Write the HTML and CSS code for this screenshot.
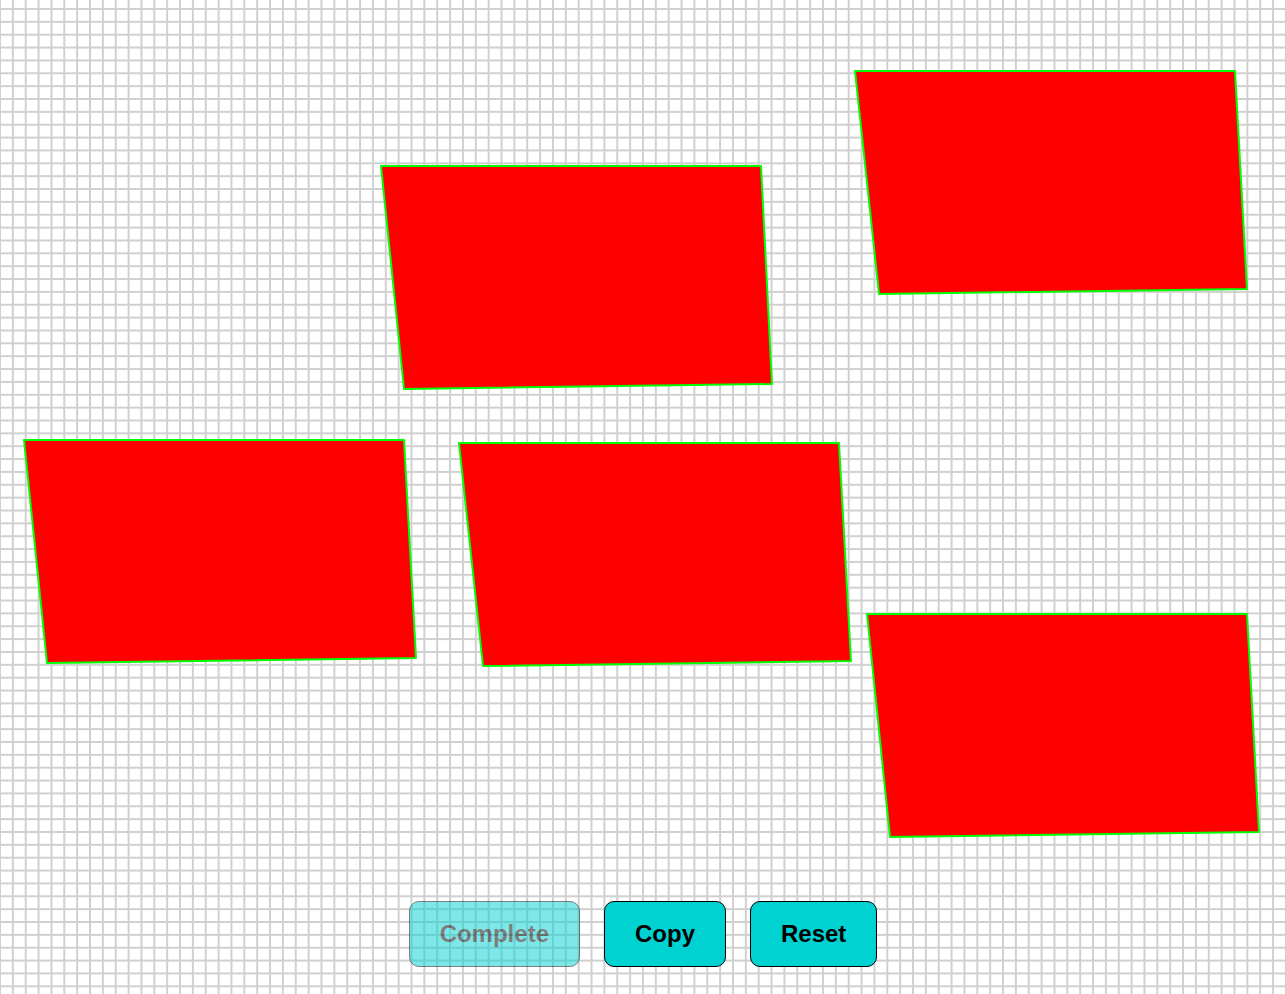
FILE: index.html
```html
<!DOCTYPE html>
<html>
<head>
<meta charset="utf-8">
<title>Shapes</title>
<link rel="stylesheet" href="styles.css">
</head>
<body>
<main class="board">
  <svg class="canvas" width="1286" height="994" viewBox="0 0 1286 994">
    <polygon class="shape" points="381,166 761,166 772,384 404,389"/>
    <polygon class="shape" points="855,71 1235,71 1247,289 879,294"/>
    <polygon class="shape" points="24,440 404,440 416,658 47,663"/>
    <polygon class="shape" points="459,443 839,443 851,661 483,666"/>
    <polygon class="shape" points="867,614 1247,614 1259,832 890,837"/>
  </svg>
</main>
<footer class="toolbar">
  <button class="btn btn-disabled" disabled>Complete</button>
  <button class="btn">Copy</button>
  <button class="btn">Reset</button>
</footer>
</body>
</html>
```

FILE: styles.css
```css
html, body {
  margin: 0;
  padding: 0;
}
body {
  width: 1286px;
  height: 994px;
  overflow: hidden;
  display: flex;
  flex-direction: column;
  background-color: #ffffff;
  background-image:
    linear-gradient(to right, #d0d0d0 2px, transparent 2px),
    linear-gradient(to bottom, #d0d0d0 2px, transparent 2px);
  background-size: 12.86px 12.86px;
  background-position: -1px 8px;
  font-family: "Liberation Sans", Arial, sans-serif;
}
.board {
  flex: 1;
  position: relative;
}
.canvas {
  position: absolute;
  left: 0;
  top: 0;
}
.shape {
  fill: #ff0000;
  stroke: #00ff00;
  stroke-width: 2;
  stroke-linejoin: round;
}
.toolbar {
  position: relative;
  display: flex;
  justify-content: center;
  gap: 24px;
  padding-bottom: 27px;
}
.btn {
  height: 66px;
  padding: 0 30px;
  border: 1px solid #000;
  border-radius: 10px;
  background: #00d2d2;
  color: #000;
  font-family: "Liberation Sans", Arial, sans-serif;
  font-weight: bold;
  font-size: 24px;
  cursor: pointer;
}
.btn-disabled {
  opacity: 0.5;
  cursor: default;
}
```
